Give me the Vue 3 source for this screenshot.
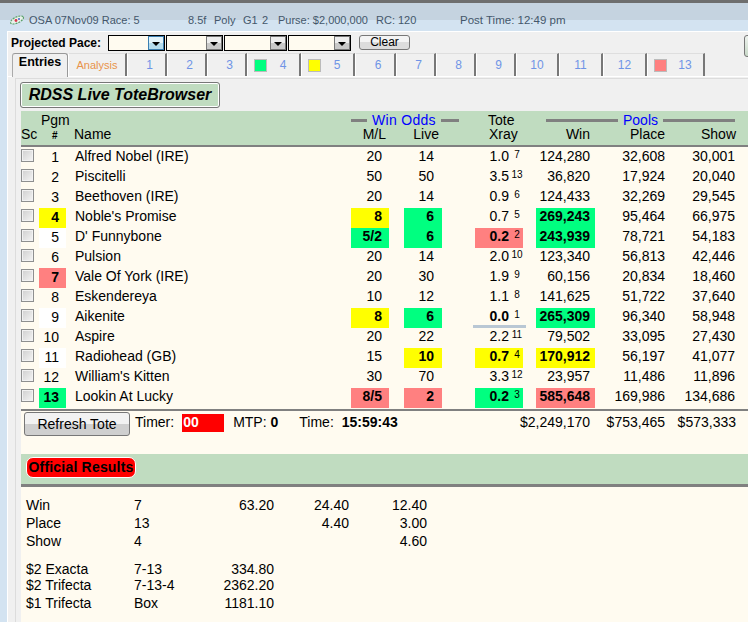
<script setup>
const tabs = [
  { label: 'Entries', width: 56, active: true },
  { label: 'Analysis', width: 59, orange: true },
  { label: '1', width: 40 },
  { label: '2', width: 40 },
  { label: '3', width: 40 },
  { label: '4', width: 54, swatch: 'g' },
  { label: '5', width: 54, swatch: 'y' },
  { label: '6', width: 41 },
  { label: '7', width: 40 },
  { label: '8', width: 40 },
  { label: '9', width: 40 },
  { label: '10', width: 43, wide: true },
  { label: '11', width: 44, wide: true },
  { label: '12', width: 44, wide: true },
  { label: '13', width: 58, swatch: 'r' },
];

const combos = [57, 57, 63, 63];

// hl = highlight per column: pgm, ml, live, tote, win
const rows = [
  { pgm: 1, name: 'Alfred Nobel (IRE)', ml: '20', live: '14', tote: '1.0', rank: 7, win: '124,280', place: '32,608', show: '30,001' },
  { pgm: 2, name: 'Piscitelli', ml: '50', live: '50', tote: '3.5', rank: 13, win: '36,820', place: '17,924', show: '20,040' },
  { pgm: 3, name: 'Beethoven (IRE)', ml: '20', live: '14', tote: '0.9', rank: 6, win: '124,433', place: '32,269', show: '29,545' },
  { pgm: 4, name: "Noble's Promise", ml: '8', live: '6', tote: '0.7', rank: 5, win: '269,243', place: '95,464', show: '66,975', hl: { pgm: 'y', ml: 'y', live: 'g', win: 'g' } },
  { pgm: 5, name: "D' Funnybone", ml: '5/2', live: '6', tote: '0.2', rank: 2, win: '243,939', place: '78,721', show: '54,183', hl: { pgm: 'w', ml: 'g', live: 'g', tote: 'r', win: 'g' } },
  { pgm: 6, name: 'Pulsion', ml: '20', live: '14', tote: '2.0', rank: 10, win: '123,340', place: '56,813', show: '42,446' },
  { pgm: 7, name: 'Vale Of York (IRE)', ml: '20', live: '30', tote: '1.9', rank: 9, win: '60,156', place: '20,834', show: '18,460', hl: { pgm: 'r' } },
  { pgm: 8, name: 'Eskendereya', ml: '10', live: '12', tote: '1.1', rank: 8, win: '141,625', place: '51,722', show: '37,640' },
  { pgm: 9, name: 'Aikenite', ml: '8', live: '6', tote: '0.0', rank: 1, win: '265,309', place: '96,340', show: '58,948', low: true, hl: { pgm: 'w', ml: 'y', live: 'g', win: 'g' } },
  { pgm: 10, name: 'Aspire', ml: '20', live: '22', tote: '2.2', rank: 11, win: '79,502', place: '33,095', show: '27,430' },
  { pgm: 11, name: 'Radiohead (GB)', ml: '15', live: '10', tote: '0.7', rank: 4, win: '170,912', place: '56,197', show: '41,077', hl: { pgm: 'w', live: 'y', tote: 'y', win: 'y' } },
  { pgm: 12, name: "William's Kitten", ml: '30', live: '70', tote: '3.3', rank: 12, win: '23,957', place: '11,486', show: '11,896' },
  { pgm: 13, name: 'Lookin At Lucky', ml: '8/5', live: '2', tote: '0.2', rank: 3, win: '585,648', place: '169,986', show: '134,686', hl: { pgm: 'g', ml: 'r', live: 'r', tote: 'g', win: 'r' } },
];

const payouts = [
  { bet: 'Win', horse: '7', a: '63.20', b: '24.40', c: '12.40' },
  { bet: 'Place', horse: '13', a: '', b: '4.40', c: '3.00' },
  { bet: 'Show', horse: '4', a: '', b: '', c: '4.60' },
  { bet: '$2 Exacta', horse: '7-13', a: '334.80', b: '', c: '', first: true },
  { bet: '$2 Trifecta', horse: '7-13-4', a: '2362.20', b: '', c: '' },
  { bet: '$1 Trifecta', horse: 'Box', a: '1181.10', b: '', c: '' },
];

function cellClass(row, key) {
  const hl = row.hl && row.hl[key];
  return hl ? ['hl', `hl-${hl}`] : [];
}
</script>

<template>
  <div class="app">
    <button class="exit">Exit</button>
    <div class="title">
      <svg class="logo" width="14" height="12" viewBox="0 0 14 12">
        <ellipse cx="7" cy="6" rx="7" ry="3" transform="rotate(-25 7 6)" fill="#e8f2ea" stroke="#5aa06a" stroke-width="1.2" stroke-dasharray="2 1" />
        <circle cx="6" cy="6.5" r="1.4" fill="#d8324a" />
        <circle cx="9" cy="5" r="1" fill="#4a62c8" />
      </svg>
      <span class="t-race">OSA 07Nov09 Race: 5</span>
      <span class="t-dist">8.5f</span>
      <span class="t-surf">Poly</span>
      <span class="t-grade">G1</span>
      <span class="t-num">2</span>
      <span class="t-purse">Purse: $2,000,000</span>
      <span class="t-rc">RC: 120</span>
      <span class="t-post">Post Time: 12:49 pm</span>
    </div>

    <div class="main">
      <div class="panel">
        <div class="pace">
          <label class="pace-label">Projected Pace:</label>
          <div class="combos">
            <div
              v-for="(w, i) in combos"
              :key="i"
              class="combo"
              :style="{ width: w + 'px' }"
            >
              <span :class="['combo-btn', { 'combo-btn--on': i === 0 }]"><i class="arrow"></i></span>
            </div>
          </div>
          <button class="clear">Clear</button>
          <span class="edge-btn"></span>
        </div>

        <div class="tabs">
          <div
            v-for="tab in tabs"
            :key="tab.label"
            :class="['tab', { 'tab--active': tab.active, 'tab--orange': tab.orange, 'tab--wide': tab.wide }]"
            :style="{ width: tab.width + 'px' }"
          >
            <span v-if="tab.swatch" :class="['swatch', `hl-${tab.swatch}`]"></span>
            <span class="tab-label">{{ tab.label }}</span>
          </div>
        </div>

        <div class="body">
          <div class="heading">RDSS Live ToteBrowser</div>

          <div class="grid head">
            <span class="h-pgm">Pgm</span>
            <div class="h-group h-odds">
              <i class="rule"></i><span class="blue">Win Odds</span><i class="rule"></i>
            </div>
            <span class="h-tote">Tote</span>
            <div class="h-group h-pools">
              <i class="rule"></i><span class="blue">Pools</span><i class="rule"></i>
            </div>

            <span class="h-sc">Sc</span>
            <span class="h-num">#</span>
            <span class="h-name">Name</span>
            <span class="h-ml">M/L</span>
            <span class="h-live">Live</span>
            <span class="h-xray">Xray</span>
            <span class="h-win">Win</span>
            <span class="h-place">Place</span>
            <span class="h-show">Show</span>
          </div>

          <div class="rows">
            <div v-for="row in rows" :key="row.pgm" class="grid row">
              <input type="checkbox" class="check" />
              <span :class="['c-pgm', ...cellClass(row, 'pgm')]">{{ row.pgm }}</span>
              <span class="c-name">{{ row.name }}</span>
              <span :class="['c-odds', 'c-ml', ...cellClass(row, 'ml')]">{{ row.ml }}</span>
              <span class="c-gap"></span>
              <span :class="['c-odds', ...cellClass(row, 'live')]">{{ row.live }}</span>
              <span class="c-gap"></span>
              <span :class="['c-tote', ...cellClass(row, 'tote'), { 'c-tote--low': row.low }]">
                <span class="tote-val">{{ row.tote }}</span><span class="tote-rank">{{ row.rank }}</span>
              </span>
              <span class="c-gap"></span>
              <span :class="['c-win', ...cellClass(row, 'win')]">{{ row.win }}</span>
              <span class="c-pool">{{ row.place }}</span>
              <span class="c-pool">{{ row.show }}</span>
            </div>
          </div>

          <div class="grid footer">
            <div class="status">
              <button class="refresh">Refresh Tote</button>
              <span class="st-timer">Timer:</span>
              <span class="timer-box">00</span>
              <span class="st-mtp">MTP: <b>0</b></span>
              <span class="st-time">Time:</span>
              <b class="st-clock">15:59:43</b>
            </div>
            <span class="f-win">$2,249,170</span>
            <span class="f-place">$753,465</span>
            <span class="f-show">$573,333</span>
          </div>

          <div class="results-bar">
            <span class="official">Official Results</span>
          </div>

          <div class="payouts">
            <div
              v-for="p in payouts"
              :key="p.bet"
              :class="['payout', { 'payout--first': p.first }]"
            >
              <span>{{ p.bet }}</span>
              <span>{{ p.horse }}</span>
              <span class="amt">{{ p.a }}</span>
              <span class="amt">{{ p.b }}</span>
              <span class="amt">{{ p.c }}</span>
            </div>
          </div>
        </div>
      </div>
    </div>
  </div>
</template>

<style>
html,
body {
  margin: 0;
  background: #fffbf0;
}
</style>

<style scoped>
.app {
  position: relative;
  display: flex;
  flex-direction: column;
  width: 748px;
  height: 622px;
  overflow: hidden;
  font-family: "Liberation Sans", Arial, sans-serif;
  font-size: 14px;
  color: #000;
  background: #d3e3f1;
  border-top: 3px solid #6e6e6e;
  box-sizing: border-box;
}

.exit {
  position: absolute;
  left: 24px;
  top: -11px;
  width: 30px;
  height: 19px;
  padding: 0;
  font: 12px "Liberation Sans", Arial, sans-serif;
  color: #666;
  background: #dfe3e8;
  border: 1px solid #8a8a8a;
  border-radius: 2px;
  box-shadow: 1px 1px 1px #999;
}

.title {
  position: relative;
  flex: none;
  height: 28px;
  font-size: 11px;
  line-height: 14px;
  color: #44576b;
  background: linear-gradient(#c5d3e0 0, #c5d3e0 17px, #d3e3f1 17px);
}

.title span,
.logo {
  position: absolute;
  top: 10px;
  white-space: nowrap;
}

.logo { left: 10px; top: 11px; }
.t-race { left: 29px; }
.t-dist { left: 188px; }
.t-surf { left: 214px; }
.t-grade { left: 243px; }
.t-num { left: 262px; }
.t-purse { left: 278px; }
.t-rc { left: 376px; }
.t-post { left: 460px; font-size: 11.5px; }

.main {
  flex: 1;
  display: flex;
  min-height: 0;
  padding-left: 7px;
}

.panel {
  position: relative;
  flex: 1;
  display: flex;
  flex-direction: column;
  background: #f0f0f0;
  border-left: 1px solid #fff;
  border-top: 1px solid #fff;
}

.pace {
  flex: none;
  display: flex;
  align-items: center;
  height: 21px;
  padding-left: 3px;
}

.pace-label {
  width: 97px;
  font-size: 12px;
  font-weight: 700;
}

.combos {
  display: flex;
  gap: 1px;
}

.combo {
  display: flex;
  justify-content: flex-end;
  height: 16px;
  box-sizing: border-box;
  background: #fffbf0;
  border: 1px solid #000;
}

.combo-btn {
  display: flex;
  align-items: center;
  justify-content: center;
  width: 16px;
  background: linear-gradient(#ededed 50%, #c9c9c9 50%);
  border: 1px solid #777;
  box-sizing: border-box;
}

.combo-btn--on {
  background: linear-gradient(#e2f3fa 50%, #b5dced 50%);
  border-color: #3c7fb1;
}

.arrow {
  width: 0;
  height: 0;
  margin-top: 3px;
  border-left: 4px solid transparent;
  border-right: 4px solid transparent;
  border-top: 4px solid #000;
}

.clear {
  width: 51px;
  height: 15px;
  margin-left: 8px;
  padding: 0;
  font: 12px/13px "Liberation Sans", Arial, sans-serif;
  background: linear-gradient(#f4f4f4 50%, #dcdcdc 50%);
  border: 1px solid #777;
  border-radius: 3px;
}

.edge-btn {
  position: absolute;
  left: 736px;
  top: 3px;
  width: 20px;
  height: 22px;
  box-sizing: border-box;
  background: linear-gradient(#eef2ee, #c7d8c7);
  border: 1px solid #777;
  border-radius: 3px;
}

.tabs {
  flex: none;
  display: flex;
  height: 23px;
  padding-left: 4px;
  border-bottom: 1px solid #fff;
}

.tab {
  display: flex;
  align-items: center;
  box-sizing: border-box;
  padding: 0 0 0 6px;
  font-size: 12px;
  color: #6f94e6;
  border-top: 1px solid #dedede;
  border-left: 1px solid #fff;
  border-right: 2px solid #777;
}

.tab-label {
  flex: 1;
  text-align: center;
}

.tab--wide {
  padding-left: 0;
}

.tab--active {
  align-items: flex-start;
  padding: 1px 0 0;
  font-size: 12.5px;
  font-weight: 700;
  color: #000;
  height: 24px;
  background: #f0f0f0;
  border-top-color: #999;
  border-left-color: #aaa;
  border-right: 1px solid #999;
  border-radius: 3px 3px 0 0;
}

.tab--orange {
  padding: 0;
  font-size: 11px;
  color: #e8934a;
}

.swatch {
  flex: none;
  width: 11px;
  height: 11px;
  border: 1px solid #bbb;
}

.body {
  flex: 1;
  display: flex;
  flex-direction: column;
  margin: 1px 0 0 7px;
  padding-left: 5px;
  border-left: 1px solid #dcdcdc;
  border-top: 1px solid #dcdcdc;
  min-height: 0;
}

.heading {
  align-self: flex-start;
  width: 200px;
  height: 26px;
  margin: 3px 0 3px -1px;
  box-sizing: border-box;
  font-size: 16px;
  font-weight: 700;
  font-style: italic;
  line-height: 24px;
  text-align: center;
  white-space: nowrap;
  background: #c0dcc0;
  border: 1px solid #777;
  border-radius: 3px;
  box-shadow: inset 0 0 0 1px #fff;
}

.grid {
  display: grid;
  grid-template-columns: 18px 27px 285px 38px 15px 38px 33px 48px 13px 59px 70px 70px 1fr;
}

.head {
  grid-template-rows: 14px 14px;
  padding: 2px 0 4px;
  line-height: 14px;
  background: #c0dcc0;
  border-bottom: 2px solid #808080;
}

.h-pgm { grid-column: 2; grid-row: 1; margin-left: 2px; white-space: nowrap; }
.h-sc { grid-column: 1; grid-row: 2; white-space: nowrap; }
.h-num { grid-column: 2; grid-row: 2; padding: 2px 0 0 13px; font-size: 10px; font-weight: 700; }
.h-name { grid-column: 3; grid-row: 2; padding-left: 8px; }
.h-ml { grid-column: 4; grid-row: 2; padding-right: 3px; text-align: right; }
.h-live { grid-column: 6; grid-row: 2; padding-right: 3px; text-align: right; }
.h-tote { grid-column: 8; grid-row: 1; padding-left: 13px; }
.h-xray { grid-column: 8; grid-row: 2; padding-left: 14px; }
.h-win { grid-column: 10; grid-row: 2; padding-right: 5px; text-align: right; }
.h-place { grid-column: 11; grid-row: 2; text-align: right; }
.h-show { grid-column: 12; grid-row: 2; margin-right: -1px; text-align: right; }

.h-group {
  display: flex;
  align-items: center;
  grid-row: 1;
  gap: 5px;
}

.h-odds {
  grid-column: 4 / 7;
  margin-right: -17px;
}

.h-odds .blue {
  letter-spacing: 0.3px;
}

.h-odds .rule:first-child { flex: none; width: 16px; }

.h-pools {
  grid-column: 10 / 13;
  margin-left: 10px;
}

.rule {
  flex: 1;
  height: 3px;
  margin-top: 1px;
  background: #808080;
}

.blue {
  color: #0000ff;
}

.rows {
  flex: none;
  padding: 1px 0;
  background: #fffbf0;
  border-bottom: 2px solid #808080;
}

.row {
  height: 20px;
  line-height: 16px;
}

.check {
  appearance: none;
  width: 13px;
  height: 13px;
  margin: 1px 0 0;
  background: linear-gradient(135deg, #cfcfcf, #f5f5f5);
  border: 1px solid #8e8f8f;
  box-shadow: inset 0 0 0 1px #f2f2f2;
  box-sizing: border-box;
}

.c-pgm {
  padding: 1px 7px 0 0;
  text-align: right;
}

.c-name {
  padding-left: 9px;
  white-space: nowrap;
}

.c-odds {
  padding-right: 8px;
  text-align: right;
}

.c-ml {
  padding-right: 7px;
}

.c-tote {
  display: flex;
  justify-content: flex-end;
}

.tote-val {
  margin-right: 2px;
}

.tote-rank {
  width: 12px;
  font-size: 10px;
  font-weight: 400;
  line-height: 14px;
  text-align: center;
}

.c-tote--low {
  position: relative;
  font-weight: 700;
}

.c-tote--low::after {
  content: "";
  position: absolute;
  left: -2px;
  right: -3px;
  bottom: 0;
  height: 3px;
  background: #b9c7d4;
}

.c-win {
  padding-right: 5px;
  text-align: right;
}

.c-pool {
  text-align: right;
}

.hl {
  font-weight: 700;
}

.hl-y { background: #ffff00; }
.hl-g { background: #00ff80; }
.hl-r { background: #ff8080; }
.hl-w { background: #fff; font-weight: 400; }

.footer {
  flex: none;
  height: 43px;
  line-height: 16px;
  background: #fffbf0;
}

.status {
  grid-column: 1 / 10;
  display: flex;
  align-items: flex-start;
  padding: 1px 0 0 3px;
}

.refresh {
  flex: none;
  width: 106px;
  height: 24px;
  padding: 0;
  font: 14px "Liberation Sans", Arial, sans-serif;
  background: linear-gradient(#f2f2f2 50%, #cfcfcf 50%);
  border: 1px solid #777;
  border-radius: 3px;
}

.st-timer { margin: 2px 0 0 5px; }

.timer-box {
  width: 42px;
  height: 18px;
  margin: 2px 0 0 8px;
  padding-left: 1px;
  box-sizing: border-box;
  font-weight: 700;
  color: #fff;
  background: #ff0000;
}

.st-mtp { margin: 2px 0 0 9px; }
.st-time { margin: 2px 0 0 21px; }
.st-clock { margin: 2px 0 0 8px; }

.f-win,
.f-place,
.f-show {
  margin-top: 3px;
  white-space: nowrap;
  justify-self: end;
}

.f-win { margin-right: 5px; }
.f-show { margin-right: -1px; }

.results-bar {
  flex: none;
  display: flex;
  align-items: flex-start;
  height: 27px;
  padding: 3px 0 0 5px;
  background: #c0dcc0;
  border-bottom: 3px solid #808080;
}

.official {
  width: 110px;
  height: 21px;
  box-sizing: border-box;
  font-weight: 700;
  letter-spacing: 0.2px;
  line-height: 19px;
  text-align: center;
  white-space: nowrap;
  background: #ff0000;
  border: 1px solid #fff;
  border-radius: 7px;
}

.payouts {
  flex: 1;
  padding: 10px 0 0 5px;
  line-height: 16px;
  background: #fffbf0;
}

.payout {
  display: grid;
  grid-template-columns: 108px 60px 80px 75px 78px;
  height: 18px;
}

.payout--first {
  margin-top: 10px;
  height: 16px;
}

.amt {
  text-align: right;
}
</style>
